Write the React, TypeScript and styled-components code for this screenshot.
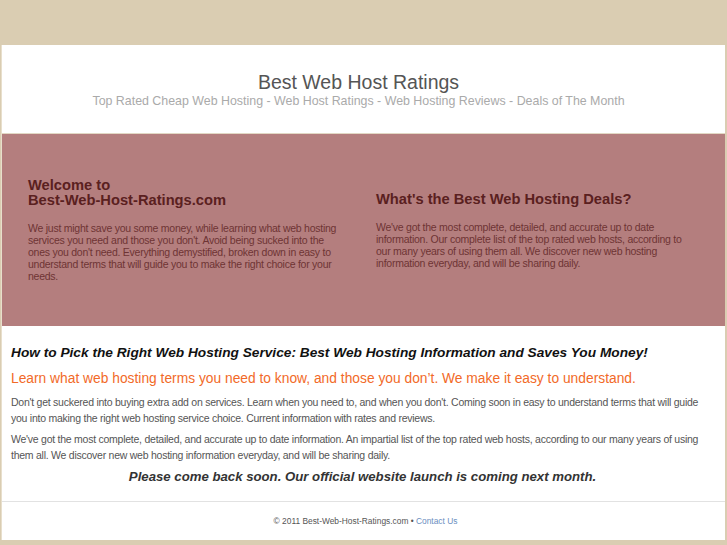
import React from "react";
import styled, { createGlobalStyle } from "styled-components";

const Global = createGlobalStyle`
  html, body { margin: 0; padding: 0; }
  body { background: #dacdb2; font-family: "Liberation Sans", Arial, sans-serif; }
`;

const Page = styled.div`
  margin: 45px 2px 5px 1px;
  background: #fff;
  border-left: 1px solid #e8dfcc;
`;

const Header = styled.header`
  height: 89px;
  display: flex;
  flex-direction: column;
  align-items: center;
  justify-content: center;
  padding: 2px 10px 0 0;
  box-sizing: border-box;
  border-bottom: 1px solid #e2d8c4;
`;

const Title = styled.h1`
  margin: 0;
  font-size: 19.5px;
  font-weight: normal;
  color: #555;
  line-height: 22px;
`;

const Tagline = styled.div`
  font-size: 12.4px;
  color: #aaa;
  line-height: 17px;
`;

const Band = styled.section`
  background: #b47e7e;
  height: 192px;
  display: grid;
  grid-template-columns: 348px 1fr;
  align-items: center;
`;

const Column = styled.div<{ $left: number; $right: number }>`
  padding: 0 ${(p) => p.$right}px 0 ${(p) => p.$left}px;
`;

const BandHeading = styled.h2`
  margin: 0 0 14px;
  font-size: 14.7px;
  font-weight: bold;
  color: #5a2020;
  line-height: 15px;
`;

const BandText = styled.p`
  margin: 0;
  font-size: 10.5px;
  letter-spacing: -0.25px;
  line-height: 12px;
  color: #6e3434;
`;

const Main = styled.main`
  padding: 18px 11px 15px 9px;
`;

const Lead = styled.h3`
  margin: 0 0 8px;
  font-size: 13.7px;
  font-style: italic;
  font-weight: bold;
  color: #111;
  line-height: 18px;
`;

const Orange = styled.h4`
  margin: 0 0 6px;
  font-size: 13.8px;
  font-weight: normal;
  color: #f26a28;
  line-height: 18px;
`;

const Para = styled.p`
  margin: 0 0 5px;
  font-size: 10.5px;
  letter-spacing: -0.25px;
  line-height: 16px;
  color: #555;
`;

const Closing = styled.p`
  margin: 0;
  text-align: center;
  font-size: 13.2px;
  font-style: italic;
  font-weight: bold;
  color: #333;
  line-height: 18px;
`;

const Footer = styled.footer`
  border-top: 1px solid #e2e2e2;
  height: 38px;
  display: flex;
  align-items: center;
  justify-content: center;
  padding-left: 4px;
  font-size: 8.4px;
  color: #555;
`;

const Link = styled.a`
  color: #6a8ec0;
  text-decoration: none;
`;

export default function App() {
  return (
    <>
      <Global />
      <Page>
        <Header>
          <Title>Best Web Host Ratings</Title>
          <Tagline>
            Top Rated Cheap Web Hosting - Web Host Ratings - Web Hosting Reviews - Deals of The Month
          </Tagline>
        </Header>
        <Band>
          <Column $left={26} $right={6}>
            <BandHeading>
              Welcome to
              <br />
              Best-Web-Host-Ratings.com
            </BandHeading>
            <BandText>
              We just might save you some money, while learning what web hosting services you need and
              those you don't. Avoid being sucked into the ones you don't need. Everything demystified,
              broken down in easy to understand terms that will guide you to make the right choice for
              your needs.
            </BandText>
          </Column>
          <Column $left={26} $right={30}>
            <BandHeading>What's the Best Web Hosting Deals?</BandHeading>
            <BandText>
              We've got the most complete, detailed, and accurate up to date information. Our complete
              list of the top rated web hosts, according to our many years of using them all. We
              discover new web hosting information everyday, and will be sharing daily.
            </BandText>
          </Column>
        </Band>
        <Main>
          <Lead>
            How to Pick the Right Web Hosting Service: Best Web Hosting Information and Saves You Money!
          </Lead>
          <Orange>
            Learn what web hosting terms you need to know, and those you don’t. We make it easy to
            understand.
          </Orange>
          <Para>
            Don't get suckered into buying extra add on services. Learn when you need to, and when you
            don't. Coming soon in easy to understand terms that will guide you into making the right web
            hosting service choice. Current information with rates and reviews.
          </Para>
          <Para>
            We've got the most complete, detailed, and accurate up to date information. An impartial
            list of the top rated web hosts, according to our many years of using them all. We discover
            new web hosting information everyday, and will be sharing daily.
          </Para>
          <Closing>Please come back soon. Our official website launch is coming next month.</Closing>
        </Main>
        <Footer>
          <span>
            © 2011 Best-Web-Host-Ratings.com • <Link href="#">Contact Us</Link>
          </span>
        </Footer>
      </Page>
    </>
  );
}
